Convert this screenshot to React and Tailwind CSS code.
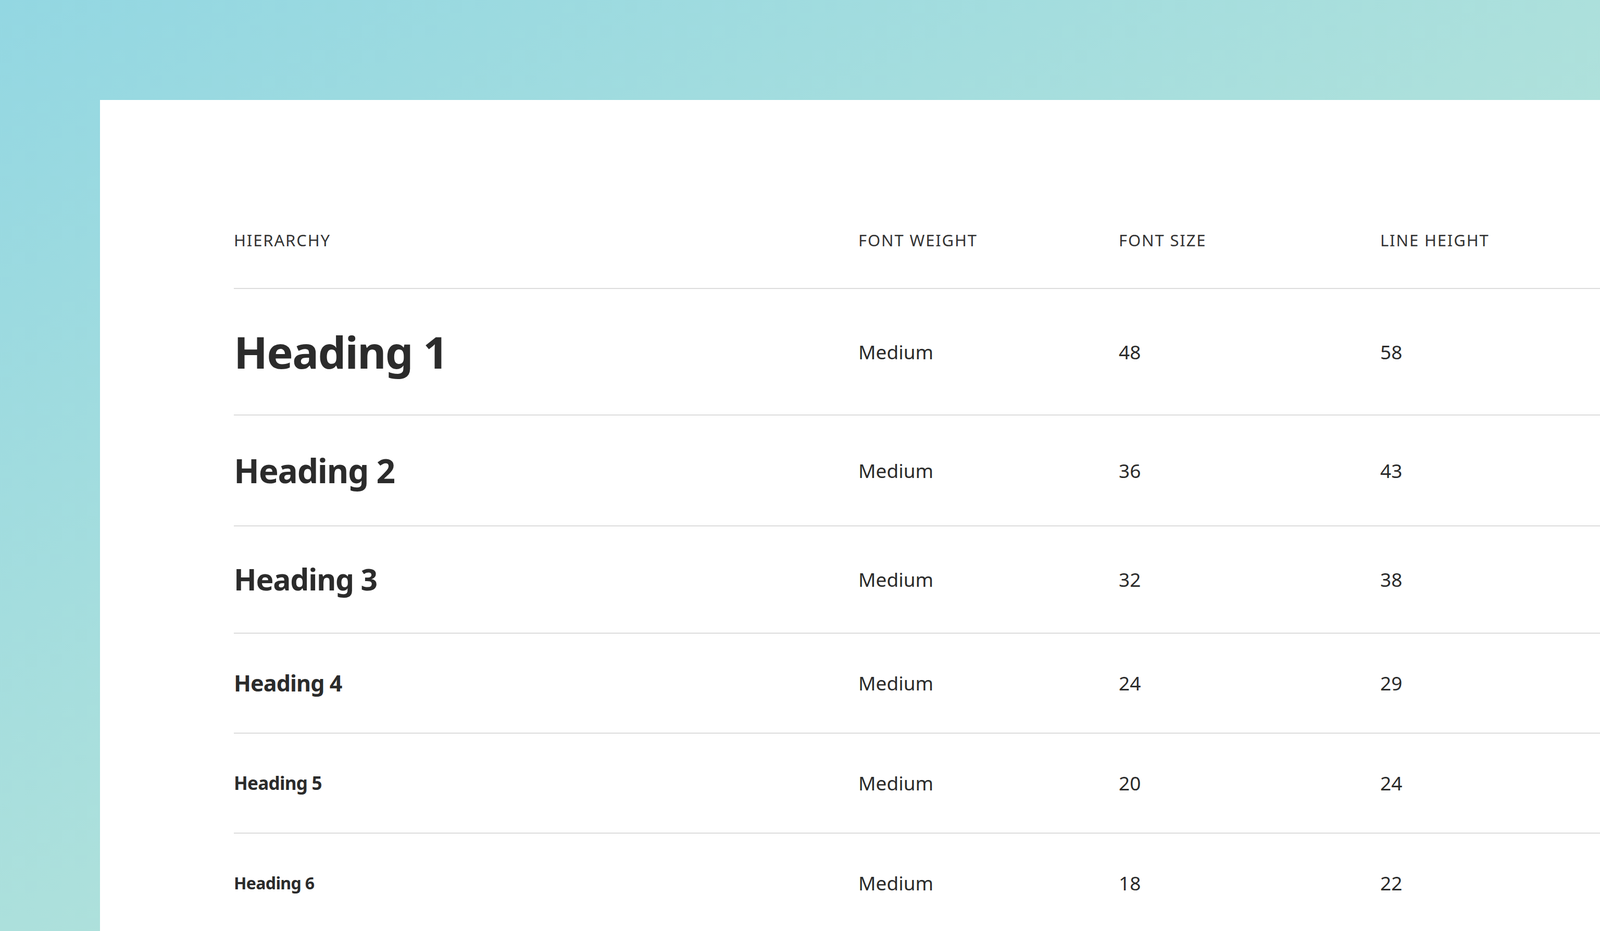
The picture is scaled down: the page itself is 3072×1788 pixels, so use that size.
import React from 'react';

const rows = [
  { name: 'Heading 1', size: 'text-[85px]', h: 'h-[243px]', fs: '48', lh: '58' },
  { name: 'Heading 2', size: 'text-[64px]', h: 'h-[213px]', fs: '36', lh: '43' },
  { name: 'Heading 3', size: 'text-[57px]', h: 'h-[206px]', fs: '32', lh: '38' },
  { name: 'Heading 4', size: 'text-[43px]', h: 'h-[192px]', fs: '24', lh: '29' },
  { name: 'Heading 5', size: 'text-[35px]', h: 'h-[192px]', fs: '20', lh: '24' },
  { name: 'Heading 6', size: 'text-[32px]', h: 'h-[192px]', fs: '18', lh: '22' },
];

export default function App() {
  return (
    <div className="w-[3072px] h-[1788px] overflow-hidden bg-gradient-to-br from-[#93d7e2] via-[#ace0dc] to-[#c2e7d6] pt-[192px] pl-[192px] font-['Inter',sans-serif] text-[#2b2b2b]">
      <div className="bg-white w-full h-full pl-[257px] pt-[178px]">
        <div className="flex items-center h-[185px] border-b-2 border-[#dcdcdc] text-[31px] tracking-[0.06em] text-[#333]">
          <div className="w-[1199px]">HIERARCHY</div>
          <div className="w-[500px]">FONT WEIGHT</div>
          <div className="w-[502px]">FONT SIZE</div>
          <div>LINE HEIGHT</div>
        </div>
        {rows.map((r) => (
          <div key={r.name} className={`flex items-center ${r.h} border-b-2 border-[#dcdcdc] text-[37px]`}>
            <div className={`w-[1199px] font-bold tracking-[-0.02em] ${r.size}`}>{r.name}</div>
            <div className="w-[500px]">Medium</div>
            <div className="w-[502px]">{r.fs}</div>
            <div>{r.lh}</div>
          </div>
        ))}
      </div>
    </div>
  );
}
